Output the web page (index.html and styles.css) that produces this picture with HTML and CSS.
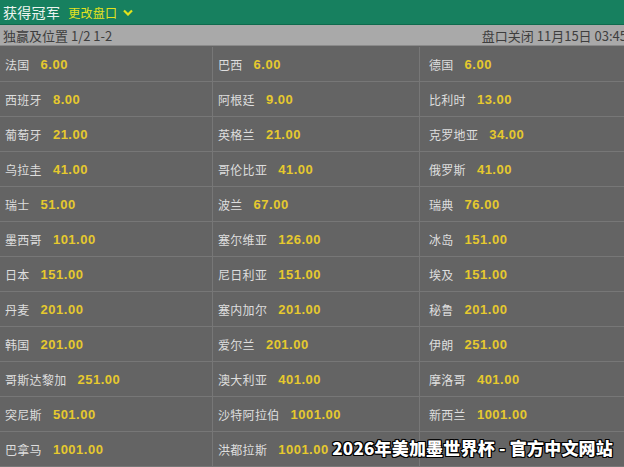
FILE: index.html
```html
<!DOCTYPE html>
<html lang="zh">
<head>
<meta charset="utf-8">
<link rel="stylesheet" href="styles.css">
</head>
<body>
<div class="page">
  <div class="topbar">
    <span class="title">获得冠军</span>
    <span class="change">更改盘口</span>
    <svg class="chev" width="10" height="7" viewBox="0 0 10 7"><path d="M1 1.5 L5 5.5 L9 1.5" fill="none" stroke="#e2e21c" stroke-width="2.2"/></svg>
  </div>
  <div class="subbar">
    <span class="market">独赢及位置 1/2 1-2</span>
    <span class="close">盘口关闭 11月15日 03:45</span>
  </div>
  <div class="grid">
    <div class="cell"><span class="name">法国</span><span class="odds">6.00</span></div>
    <div class="cell"><span class="name">巴西</span><span class="odds">6.00</span></div>
    <div class="cell"><span class="name">德国</span><span class="odds">6.00</span></div>
    <div class="cell"><span class="name">西班牙</span><span class="odds">8.00</span></div>
    <div class="cell"><span class="name">阿根廷</span><span class="odds">9.00</span></div>
    <div class="cell"><span class="name">比利时</span><span class="odds">13.00</span></div>
    <div class="cell"><span class="name">葡萄牙</span><span class="odds">21.00</span></div>
    <div class="cell"><span class="name">英格兰</span><span class="odds">21.00</span></div>
    <div class="cell"><span class="name">克罗地亚</span><span class="odds">34.00</span></div>
    <div class="cell"><span class="name">乌拉圭</span><span class="odds">41.00</span></div>
    <div class="cell"><span class="name">哥伦比亚</span><span class="odds">41.00</span></div>
    <div class="cell"><span class="name">俄罗斯</span><span class="odds">41.00</span></div>
    <div class="cell"><span class="name">瑞士</span><span class="odds">51.00</span></div>
    <div class="cell"><span class="name">波兰</span><span class="odds">67.00</span></div>
    <div class="cell"><span class="name">瑞典</span><span class="odds">76.00</span></div>
    <div class="cell"><span class="name">墨西哥</span><span class="odds">101.00</span></div>
    <div class="cell"><span class="name">塞尔维亚</span><span class="odds">126.00</span></div>
    <div class="cell"><span class="name">冰岛</span><span class="odds">151.00</span></div>
    <div class="cell"><span class="name">日本</span><span class="odds">151.00</span></div>
    <div class="cell"><span class="name">尼日利亚</span><span class="odds">151.00</span></div>
    <div class="cell"><span class="name">埃及</span><span class="odds">151.00</span></div>
    <div class="cell"><span class="name">丹麦</span><span class="odds">201.00</span></div>
    <div class="cell"><span class="name">塞内加尔</span><span class="odds">201.00</span></div>
    <div class="cell"><span class="name">秘鲁</span><span class="odds">201.00</span></div>
    <div class="cell"><span class="name">韩国</span><span class="odds">201.00</span></div>
    <div class="cell"><span class="name">爱尔兰</span><span class="odds">201.00</span></div>
    <div class="cell"><span class="name">伊朗</span><span class="odds">251.00</span></div>
    <div class="cell"><span class="name">哥斯达黎加</span><span class="odds">251.00</span></div>
    <div class="cell"><span class="name">澳大利亚</span><span class="odds">401.00</span></div>
    <div class="cell"><span class="name">摩洛哥</span><span class="odds">401.00</span></div>
    <div class="cell"><span class="name">突尼斯</span><span class="odds">501.00</span></div>
    <div class="cell"><span class="name">沙特阿拉伯</span><span class="odds">1001.00</span></div>
    <div class="cell"><span class="name">新西兰</span><span class="odds">1001.00</span></div>
    <div class="cell"><span class="name">巴拿马</span><span class="odds">1001.00</span></div>
    <div class="cell"><span class="name">洪都拉斯</span><span class="odds">1001.00</span></div>
    <div class="cell"><span class="name"></span><span class="odds"></span></div>
  </div>
  <div class="watermark">2026年美加墨世界杯 - 官方中文网站</div>
</div>
</body>
</html>
```

FILE: styles.css
```css
html, body {
  margin: 0;
  padding: 0;
  background: #646464;
  overflow: hidden;
}
.page {
  position: relative;
  width: 624px;
  height: 467px;
  overflow: hidden;
  font-family: "Noto Sans CJK SC", "Liberation Sans", sans-serif;
}
.topbar {
  height: 25px;
  background: #17805f;
  display: flex;
  align-items: center;
  padding-left: 3px;
  box-sizing: border-box;
  border-bottom: 1px solid #0f6a4d;
}
.title {
  color: #eef4f0;
  font-size: 14px;
  letter-spacing: 0.3px;
}
.change {
  color: #e4e21e;
  font-size: 12px;
  margin-left: 8px;
  letter-spacing: 0.3px;
}
.chev {
  margin-left: 6px;
  margin-top: 1px;
}
.subbar {
  height: 21px;
  background: #a9a9a9;
  display: flex;
  align-items: center;
  justify-content: space-between;
  padding-left: 3px;
  box-sizing: border-box;
  white-space: nowrap;
  color: #3e3e3e;
  font-size: 13px;
  border-bottom: 1px solid #8a8a8a;
}
.market {
  flex: none;
}
.close {
  flex: none;
  margin-right: -3px;
}
.grid {
  display: grid;
  grid-template-columns: 213px 207px 1fr;
  grid-auto-rows: 35px;
  padding-top: 1px;
}
.cell {
  display: flex;
  align-items: center;
  padding-left: 5px;
  border-bottom: 1px solid #777777;
  border-right: 1px solid #777777;
  box-sizing: border-box;
  white-space: nowrap;
}
.cell:nth-child(3n) {
  padding-left: 9px;
  border-right: none;
}
.name {
  color: #dedede;
  font-size: 12px;
  letter-spacing: 0.3px;
}
.odds {
  color: #e6c92e;
  font-family: "Liberation Sans", "DejaVu Sans", sans-serif;
  font-weight: bold;
  font-size: 13px;
  letter-spacing: 0.5px;
  margin-left: 11px;
}
.watermark {
  position: absolute;
  right: 11px;
  bottom: 7px;
  color: #ffffff;
  font-size: 17px;
  font-weight: 900;
  letter-spacing: 0.2px;
  white-space: nowrap;
  text-shadow: -1px -1px 0 #000, 1px -1px 0 #000, -1px 1px 0 #000, 1px 1px 0 #000, 0 1px 0 #000, 0 -1px 0 #000, 1px 0 0 #000, -1px 0 0 #000;
}
```
